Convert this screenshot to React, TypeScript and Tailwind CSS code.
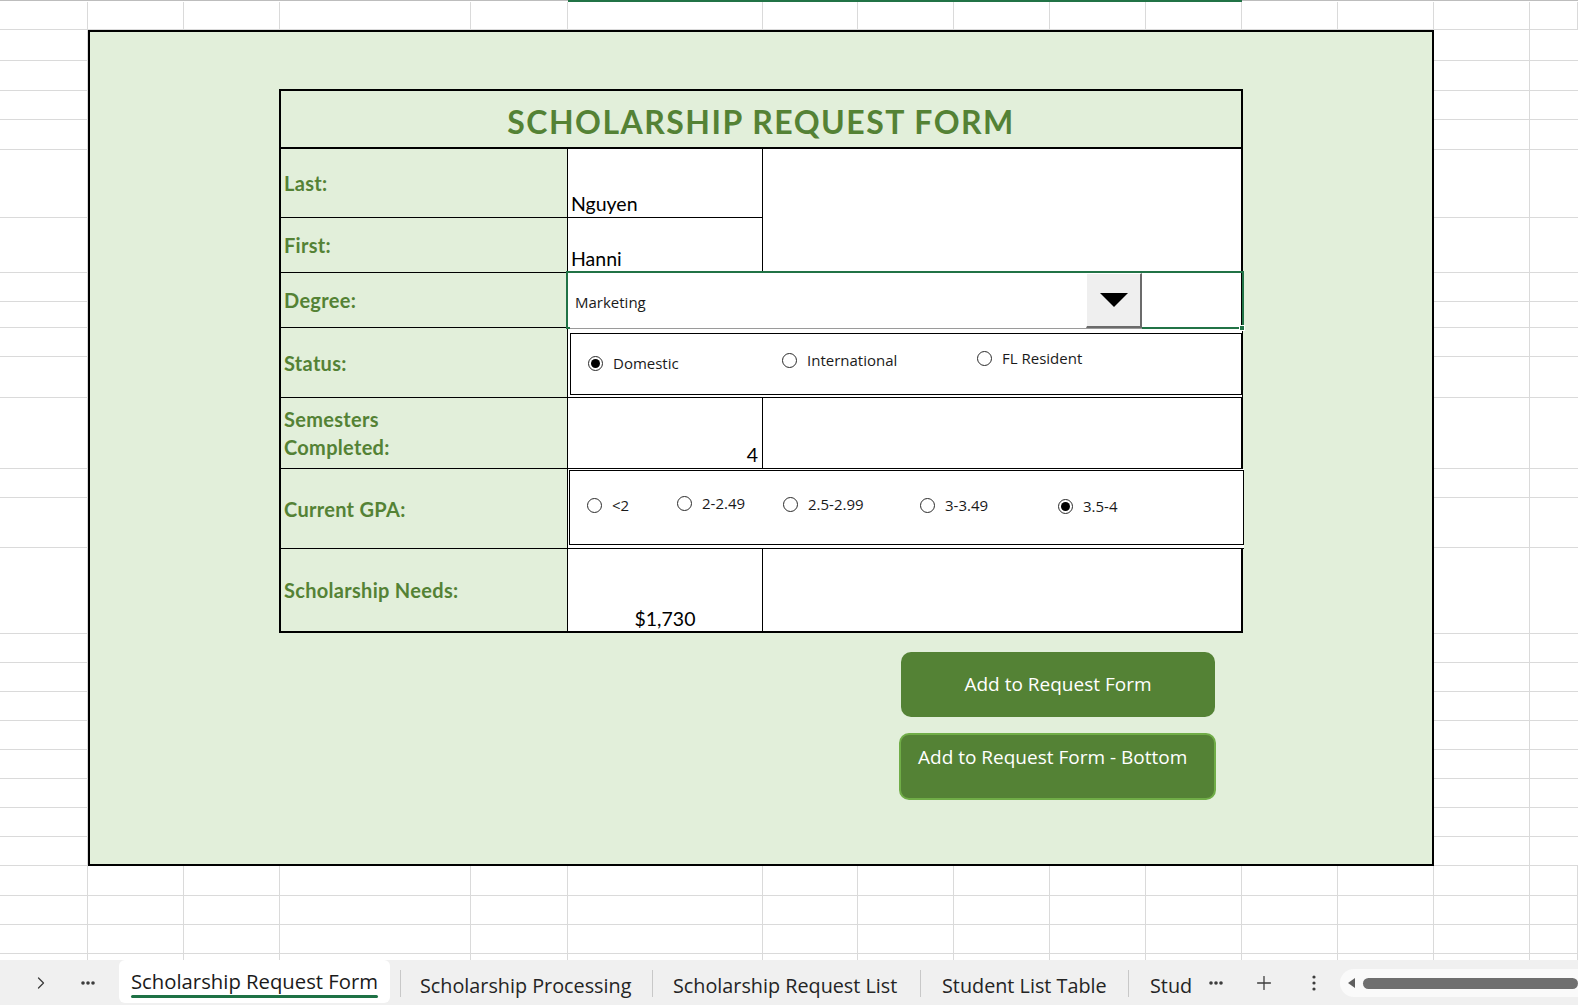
import { ChevronRight, Plus } from "lucide-react";

const cols = [
  "w-[88px]",
  "w-[96px]",
  "w-[96px]",
  "w-[191px]",
  "w-[97px]",
  "w-[195px]",
  "w-[95px]",
  "w-[96px]",
  "w-[96px]",
  "w-[96px]",
  "w-[96px]",
  "w-[96px]",
  "w-[96px]",
  "w-[96px]",
  "flex-1",
];

const sideRows = [
  "h-[31px]", "h-[30px]", "h-[29px]", "h-[30px]", "h-[68px]", "h-[55px]",
  "h-[29px]", "h-[26px]", "h-[29px]", "h-[41px]", "h-[71px]", "h-[29px]",
  "h-[50px]", "h-[86px]", "h-[29px]", "h-[29px]", "h-[29px]", "h-[29px]",
  "h-[29px]", "h-[29px]", "h-[29px]", "h-[29px]",
];

const bottomRows = ["h-[30px]", "h-[29px]", "h-[29px]"];

function GridRow({ h }: { h: string }) {
  return (
    <div className={`flex ${h}`}>
      {cols.map((w, i) => (
        <div key={i} className={`${w} shrink-0 border-r border-b border-[#dadada]`} />
      ))}
    </div>
  );
}

function SideCol({ w, last }: { w: string; last?: boolean }) {
  return (
    <div className={`${w} shrink-0 flex flex-col`}>
      {sideRows.map((h, i) => (
        <div
          key={i}
          className={`${h} shrink-0 border-b border-[#dadada] ${last ? "" : "border-r"}`}
        />
      ))}
    </div>
  );
}

function Label({ children, last }: { children: React.ReactNode; last?: boolean }) {
  return (
    <div
      className={`w-[287px] shrink-0 border-r border-black flex items-center pl-[3px] text-[20px] tracking-[0.3px] font-bold text-[#548235] leading-[28px] ${
        last ? "" : "border-b"
      }`}
    >
      {children}
    </div>
  );
}

function Radio({ checked }: { checked?: boolean }) {
  return (
    <span className="w-[15px] h-[15px] rounded-full border border-[#2b2b2b] bg-white flex items-center justify-center shrink-0">
      {checked && <span className="w-[9px] h-[9px] rounded-full bg-black" />}
    </span>
  );
}

function Option({
  label,
  checked,
  cls,
}: {
  label: string;
  checked?: boolean;
  cls: string;
}) {
  return (
    <div className={`flex items-center gap-[10px] h-[20px] shrink-0 ${cls}`}>
      <Radio checked={checked} />
      <span className="text-[15px] text-[#1a1a1a] leading-none">{label}</span>
    </div>
  );
}

function FormTable() {
  return (
    <div className="ml-[189px] mt-[57px] w-[964px] border-2 border-black flex flex-col font-['Lato',sans-serif]">
      <div className="h-[58px] border-b-2 border-black flex items-center justify-center pt-[5px]">
        <span className="text-[32px] font-bold text-[#548235] leading-none tracking-[1.5px]">
          SCHOLARSHIP REQUEST FORM
        </span>
      </div>

      <div className="flex h-[69px]">
        <Label>Last:</Label>
        <div className="w-[195px] shrink-0 bg-white border-r border-b border-black flex items-end pl-[3px] pb-[3px] text-[19.5px] leading-[20px] text-black">
          Nguyen
        </div>
        <div className="flex-1 bg-white" />
      </div>

      <div className="flex h-[55px]">
        <Label>First:</Label>
        <div className="w-[195px] shrink-0 bg-white border-r border-b border-black flex items-end pl-[3px] pb-[3px] text-[19.5px] leading-[20px] text-black">
          Hanni
        </div>
        <div className="flex-1 bg-white" />
      </div>

      <div className="flex h-[55px]">
        <Label>Degree:</Label>
        <div className="flex-1 relative bg-white border-b border-black">
          <div className="absolute -left-[2px] -top-[2px] -right-[3px] -bottom-[2px] border-2 border-[#217346]" />
          <div className="absolute -right-[4px] -bottom-[4px] w-[6px] h-[6px] bg-[#217346] border border-white" />
          <div className="relative z-10 ml-[2px] w-[572px] h-[56px] flex bg-white border-b border-[#9a9a9a]">
            <div className="flex-1 flex items-center pl-[5px] pt-[3px] font-['Open_Sans',sans-serif] text-[15px] text-[#1a1a1a]">
              Marketing
            </div>
            <div className="w-[56px] h-[55px] bg-[#efefef] border-t border-l border-white border-r-2 border-b-2 border-r-[#6b6b6b] border-b-[#6b6b6b] flex items-center justify-center">
              <svg width="28" height="14" viewBox="0 0 28 14">
                <path d="M0 0 H28 L14 14 Z" fill="#000" />
              </svg>
            </div>
          </div>
        </div>
      </div>

      <div className="flex h-[70px]">
        <Label>Status:</Label>
        <div className="flex-1 bg-white border-b border-black">
          <div className="ml-[2px] mt-[5px] w-[672px] h-[62px] border border-black flex items-start pl-[17px] font-['Open_Sans',sans-serif]">
            <Option label="Domestic" checked cls="w-[194px] mt-[19px]" />
            <Option label="International" cls="w-[195px] mt-[16px]" />
            <Option label="FL Resident" cls="mt-[14px]" />
          </div>
        </div>
      </div>

      <div className="flex h-[71px]">
        <Label>
          <span>
            Semesters
            <br />
            Completed:
          </span>
        </Label>
        <div className="w-[195px] shrink-0 bg-white border-r border-b border-black flex items-end justify-end pr-[4px] pb-[3px] text-[19.5px] leading-[20px] text-black">
          4
        </div>
        <div className="flex-1 bg-white border-b border-black" />
      </div>

      <div className="flex h-[80px]">
        <Label>Current GPA:</Label>
        <div className="flex-1 bg-white border-b border-black">
          <div className="ml-[1px] mt-[1px] w-[675px] h-[75px] border border-black flex items-start pl-[17px] font-['Open_Sans',sans-serif]">
            <Option label="<2" cls="w-[90px] mt-[24px]" />
            <Option label="2-2.49" cls="w-[106px] mt-[22px]" />
            <Option label="2.5-2.99" cls="w-[137px] mt-[23px]" />
            <Option label="3-3.49" cls="w-[138px] mt-[24px]" />
            <Option label="3.5-4" checked cls="mt-[25px]" />
          </div>
        </div>
      </div>

      <div className="flex h-[82px]">
        <Label last>Scholarship Needs:</Label>
        <div className="w-[195px] shrink-0 bg-white border-r border-black flex items-end justify-center pb-[2px] text-[19.5px] leading-[20px] text-black">
          $1,730
        </div>
        <div className="flex-1 bg-white" />
      </div>
    </div>
  );
}

function Buttons() {
  return (
    <div className="flex flex-col font-['Open_Sans',sans-serif] text-white text-[19px]">
      <button className="ml-[811px] mt-[19px] w-[314px] h-[65px] rounded-[10px] bg-[#548235] flex items-center justify-center">
        Add to Request Form
      </button>
      <button className="ml-[809px] mt-[16px] w-[317px] h-[67px] rounded-[10px] bg-[#548235] border-2 border-[#70ad47] flex items-start pl-[17px] pt-[8px]">
        Add to Request Form - Bottom
      </button>
    </div>
  );
}

function Dots() {
  return (
    <svg width="14" height="4" viewBox="0 0 14 4">
      <circle cx="2" cy="2" r="1.8" fill="#3c3c3c" />
      <circle cx="7" cy="2" r="1.8" fill="#3c3c3c" />
      <circle cx="12" cy="2" r="1.8" fill="#3c3c3c" />
    </svg>
  );
}

function Sep() {
  return <div className="w-px h-[27px] mt-[10px] bg-[#c8c8c8] shrink-0" />;
}

function TabBar() {
  return (
    <div className="h-[45px] bg-[#f0f0f0] flex items-start font-['Open_Sans',sans-serif] text-[19.8px] text-[#242424] overflow-hidden">
      <div className="w-[119px] h-full shrink-0 flex items-center">
        <ChevronRight size={20} strokeWidth={1.5} className="ml-[31px] text-[#3c3c3c]" />
        <span className="ml-[30px]">
          <Dots />
        </span>
      </div>
      <div className="w-[271px] h-[43px] shrink-0 bg-white rounded-[6px] flex flex-col pl-[12px] pt-[7px]">
        <span className="leading-[28px] text-[20.3px] text-[#1a1a1a] whitespace-nowrap">Scholarship Request Form</span>
        <span className="w-[247px] h-[3px] rounded-full bg-[#1e7145]" />
      </div>
      <div className="w-[10px] shrink-0" />
      <Sep />
      <div className="w-[251px] shrink-0 pl-[19px] pt-[12px] leading-[28px] whitespace-nowrap">Scholarship Processing</div>
      <Sep />
      <div className="w-[267px] shrink-0 pl-[20px] pt-[12px] leading-[28px] whitespace-nowrap">Scholarship Request List</div>
      <Sep />
      <div className="w-[207px] shrink-0 pl-[21px] pt-[12px] leading-[28px] whitespace-nowrap">Student List Table</div>
      <Sep />
      <div className="w-[80px] shrink-0 pl-[21px] pt-[12px] leading-[28px] whitespace-nowrap overflow-hidden">Stud</div>
      <div className="h-full flex items-center shrink-0">
        <Dots />
        <Plus size={22} strokeWidth={1.4} className="ml-[30px] text-[#3c3c3c]" />
        <svg width="4" height="16" viewBox="0 0 4 16" className="ml-[37px]">
          <circle cx="2" cy="2" r="1.6" fill="#3c3c3c" />
          <circle cx="2" cy="8" r="1.6" fill="#3c3c3c" />
          <circle cx="2" cy="14" r="1.6" fill="#3c3c3c" />
        </svg>
      </div>
      <div className="flex-1 ml-[24px] mt-[9px] h-[28px] rounded-l-full bg-[#fafafa] flex items-center pl-[8px]">
        <svg width="7" height="10" viewBox="0 0 7 10">
          <path d="M7 0 V10 L0 5 Z" fill="#5f5f5f" />
        </svg>
        <div className="flex-1 ml-[8px] h-[11px] rounded-full bg-[#6f6f6f]" />
      </div>
    </div>
  );
}

export default function App() {
  return (
    <div className="w-[1578px] h-[1005px] bg-white overflow-hidden flex flex-col font-['Open_Sans',sans-serif]">
      <div className="flex h-[2px]">
        <div className="w-[568px] border-t border-[#bdbdbd]" />
        <div className="w-[674px] bg-[#217346]" />
        <div className="flex-1 border-t border-[#bdbdbd]" />
      </div>
      <GridRow h="h-[28px]" />

      <div className="flex h-[836px]">
        <SideCol w="w-[88px]" />
        <div className="w-[1346px] h-[836px] shrink-0 border-2 border-black bg-[#e2efda] flex flex-col">
          <FormTable />
          <Buttons />
        </div>
        <SideCol w="w-[96px]" />
        <div className="flex-1">
          <SideCol w="w-full" last />
        </div>
      </div>

      {bottomRows.map((h, i) => (
        <GridRow key={i} h={h} />
      ))}
      <div className="flex h-[6px]">
        {cols.map((w, i) => (
          <div key={i} className={`${w} shrink-0 border-r border-[#dadada]`} />
        ))}
      </div>
      <TabBar />
    </div>
  );
}
